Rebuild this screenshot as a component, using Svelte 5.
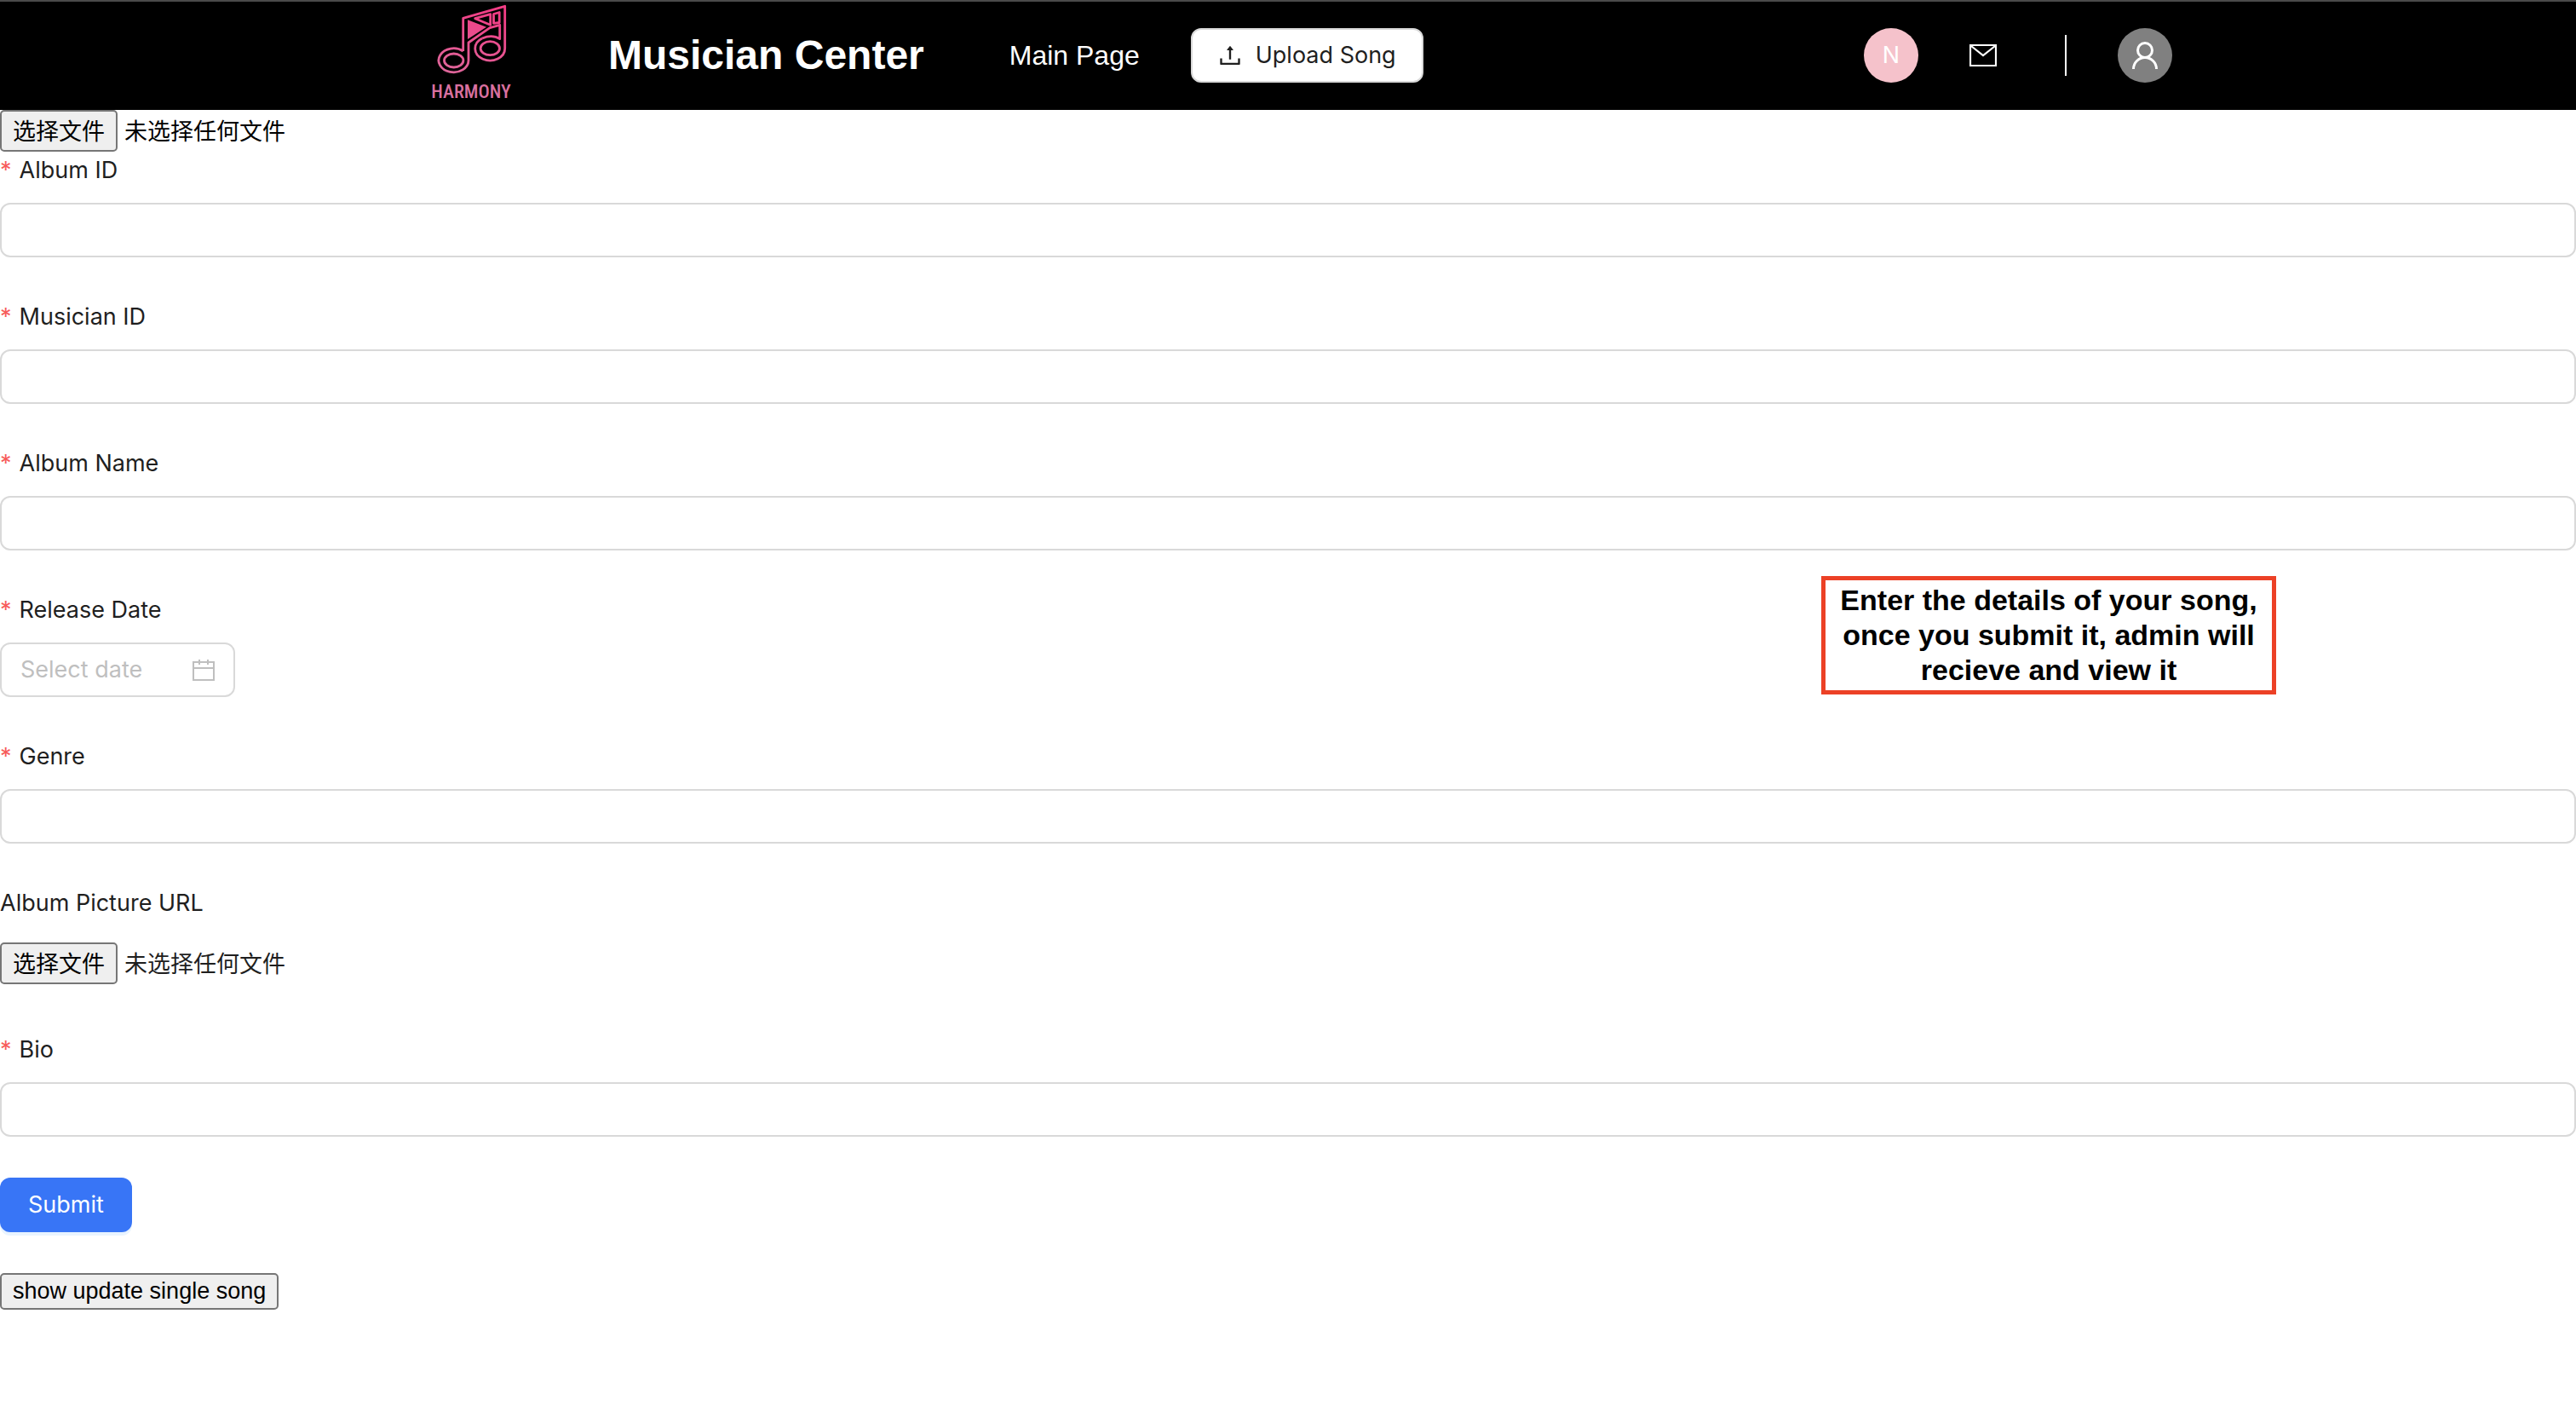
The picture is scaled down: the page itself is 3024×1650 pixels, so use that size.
<script>
  const fields = [
    { id: 'album-id', label: 'Album ID', required: true, kind: 'text' },
    { id: 'musician-id', label: 'Musician ID', required: true, kind: 'text' },
    { id: 'album-name', label: 'Album Name', required: true, kind: 'text' },
    { id: 'release-date', label: 'Release Date', required: true, kind: 'date' },
    { id: 'genre', label: 'Genre', required: true, kind: 'text' },
    { id: 'album-picture', label: 'Album Picture URL', required: false, kind: 'file' },
    { id: 'bio', label: 'Bio', required: true, kind: 'text' }
  ];
</script>

{#snippet filePicker(id, name)}
  <div class="file">
    <input class="file-input" type="file" {id} aria-label={name} />
    <label class="native-button file-button" for={id}>选择文件</label>
    <span>未选择任何文件</span>
  </div>
{/snippet}

<header class="topbar">
  <a class="logo" href="#home" aria-label="Harmony home">
    <svg viewBox="0 0 98 124" width="98" height="124">
      <defs>
        <linearGradient id="pink" gradientUnits="userSpaceOnUse" x1="75" y1="10" x2="40" y2="110">
          <stop offset="0" stop-color="#f23d85" />
          <stop offset="1" stop-color="#d9709f" />
        </linearGradient>
      </defs>
      <g fill="none" stroke="url(#pink)" stroke-width="2.8" stroke-linejoin="round">
        <path d="M39.700 57V18.300L88.700 4.300V53.700A17.500 14 0 1 1 62 42" />
        <path d="M39.700 57A17.500 14 0 1 0 46 68V47L71 29.700L82.700 26.300V42.700Q74 37 62 42" />
        <path d="M53.700 18.700L71.700 13.700V26.300ZM75.500 13.500L82.200 11.500V23.500L75.500 24.300Z" />
        <ellipse cx="28.700" cy="68" rx="11.200" ry="8" />
        <ellipse cx="71.300" cy="53.700" rx="11.200" ry="8" />
      </g>
      <path d="M45 20.300V43L67 28.700Z" fill="url(#pink)" />
      <text class="wordmark" x="49" y="112" text-anchor="middle">HARMONY</text>
    </svg>
  </a>
  <h1>Musician Center</h1>
  <a class="main-link" href="#main">Main Page</a>
  <button class="upload" type="button">
    <svg viewBox="64 64 896 896" width="28" height="28" fill="currentColor" aria-hidden="true">
      <path d="M400 317.700h73.900V656c0 4.400 3.600 8 8 8h60c4.400 0 8-3.600 8-8V317.700H624c6.700 0 10.400-7.700 6.300-12.900L518.300 163a8 8 0 00-12.600 0l-112 141.700c-4.100 5.300-.4 13 6.300 13zM878 626h-60c-4.400 0-8 3.600-8 8v154H214V634c0-4.400-3.600-8-8-8h-60c-4.400 0-8 3.600-8 8v198c0 17.700 14.300 32 32 32h684c17.700 0 32-14.300 32-32V634c0-4.400-3.600-8-8-8z" />
    </svg>
    Upload Song
  </button>
  <div class="account">
    <span class="avatar initial">N</span>
    <button class="icon-button" type="button" aria-label="Messages">
      <svg viewBox="0 0 32 26" width="32" height="26" fill="none" stroke="#fff" stroke-width="2.200">
        <path d="M1 1H31V25H1ZM2 2L16 13L30 2" />
      </svg>
    </button>
    <span class="divider"></span>
    <button class="avatar user" type="button" aria-label="Account">
      <svg viewBox="0 0 32 34" width="32" height="34" fill="none" stroke="#fff" stroke-width="3">
        <circle cx="16" cy="11" r="8.500" />
        <path d="M2.500 33A13.500 13.500 0 0 1 29.500 33" />
      </svg>
    </button>
  </div>
</header>

<main>
  {@render filePicker('song-file', 'Song file')}
  <form>
    {#each fields as field}
      <div class="field">
        <label class="field-label" for={field.id}>
          {#if field.required}<span class="star">*</span>{/if}{field.label}
        </label>
        {#if field.kind === 'text'}
          <input class="box" type="text" id={field.id} />
        {:else if field.kind === 'date'}
          <div class="box date">
            <input type="text" id={field.id} placeholder="Select date" />
            <svg viewBox="0 0 26 26" width="26" height="26" fill="none" stroke="#bfbfbf" stroke-width="2" aria-hidden="true">
              <path d="M1 4H25V25H1ZM1 11H25M8 1V7M18 1V7" />
            </svg>
          </div>
        {:else}
          <div class="file-row">{@render filePicker(field.id, field.label)}</div>
        {/if}
      </div>
    {/each}
    <button class="submit" type="submit">Submit</button>
  </form>
  <button class="native-button" type="button">show update single song</button>
  <aside class="note">Enter the details of your song, once you submit it, admin will recieve and view it</aside>
</main>

<style>
  :global(body) {
    background: #fff;
    font-family: Inter, 'Noto Sans CJK SC', sans-serif;
    font-size: 27px;
    line-height: 44px;
    color: #1f1f1f;
  }
  .topbar,
  .topbar *,
  main,
  main * {
    box-sizing: border-box;
  }
  button,
  input {
    font: inherit;
  }
  .topbar {
    display: flex;
    align-items: center;
    height: 129px;
    padding: 0 474px 1px 504px;
    border-top: 2px solid #4a4a4a;
    background: #000;
    color: #fff;
  }
  .logo {
    display: flex;
    margin-right: 112px;
  }
  .wordmark {
    fill: #d9709f;
    font: 500 22px 'Roboto Condensed', 'Liberation Sans Narrow', Roboto, sans-serif;
  }
  h1 {
    margin: 0 100px 0 0;
    font: bold 48px/56px 'Liberation Sans', sans-serif;
    white-space: nowrap;
  }
  .main-link {
    margin-right: 60px;
    color: #fff;
    font: 32px/44px 'Liberation Sans', sans-serif;
    text-decoration: none;
    white-space: nowrap;
  }
  .upload {
    display: flex;
    align-items: center;
    gap: 16px;
    height: 64px;
    padding: 0 30px;
    border: 2px solid #d9d9d9;
    border-radius: 12px;
    background: #fff;
    color: #1f1f1f;
    white-space: nowrap;
  }
  .account {
    display: flex;
    align-items: center;
    gap: 60px;
    margin-left: auto;
  }
  .avatar {
    display: flex;
    align-items: center;
    justify-content: center;
    width: 64px;
    height: 64px;
    padding: 0;
    border: 0;
    border-radius: 50%;
    color: #fff;
  }
  .initial {
    background: #f5c2cb;
  }
  .user {
    background: #808080;
  }
  .icon-button {
    display: flex;
    padding: 0;
    border: 0;
    background: none;
  }
  .divider {
    width: 2px;
    height: 48px;
    margin-left: 20px;
    background: #fff;
  }
  main {
    position: relative;
  }
  .file {
    position: relative;
    display: flex;
    align-items: baseline;
    gap: 8px;
    font: 27px/43px 'Noto Sans CJK SC', sans-serif;
  }
  main > .file {
    color: #000;
  }
  .file-input {
    position: absolute;
    width: 1px;
    height: 1px;
    opacity: 0;
  }
  .native-button {
    display: block;
    padding: 0 13px;
    border: 2px solid #767676;
    border-radius: 5px;
    background: #efefef;
    color: #000;
    font: 27px/39px 'Liberation Sans', sans-serif;
  }
  .file-button {
    padding-bottom: 2px;
    font: inherit;
  }
  .field {
    margin-bottom: 48px;
  }
  .field-label {
    display: block;
    margin-bottom: 16px;
  }
  .star {
    margin-right: 9px;
    color: #f75c5a;
  }
  .box {
    display: block;
    width: 100%;
    height: 64px;
    padding: 8px 22px;
    border: 2px solid #d9d9d9;
    border-radius: 12px;
    background: #fff;
    outline: none;
  }
  .date {
    display: flex;
    align-items: center;
    width: 276px;
  }
  .date input {
    flex: 1;
    min-width: 0;
    padding: 0;
    border: 0;
    background: none;
    outline: none;
  }
  .date input::placeholder {
    color: #bfbfbf;
    opacity: 1;
  }
  .file-row {
    display: flex;
    align-items: center;
    height: 64px;
  }
  .submit {
    display: block;
    height: 64px;
    margin-bottom: 48px;
    padding: 0 33px;
    border: 0;
    border-radius: 12px;
    background: #3875f6;
    box-shadow: 0 4px 0 #e9f4ff;
    color: #fff;
  }
  .note {
    position: absolute;
    top: 547px;
    right: 352px;
    width: 534px;
    padding: 3px 10px;
    border: 5px solid #ec4126;
    background: #fff;
    color: #000;
    font: bold 34px/41px 'Liberation Sans', sans-serif;
    text-align: center;
  }
</style>
